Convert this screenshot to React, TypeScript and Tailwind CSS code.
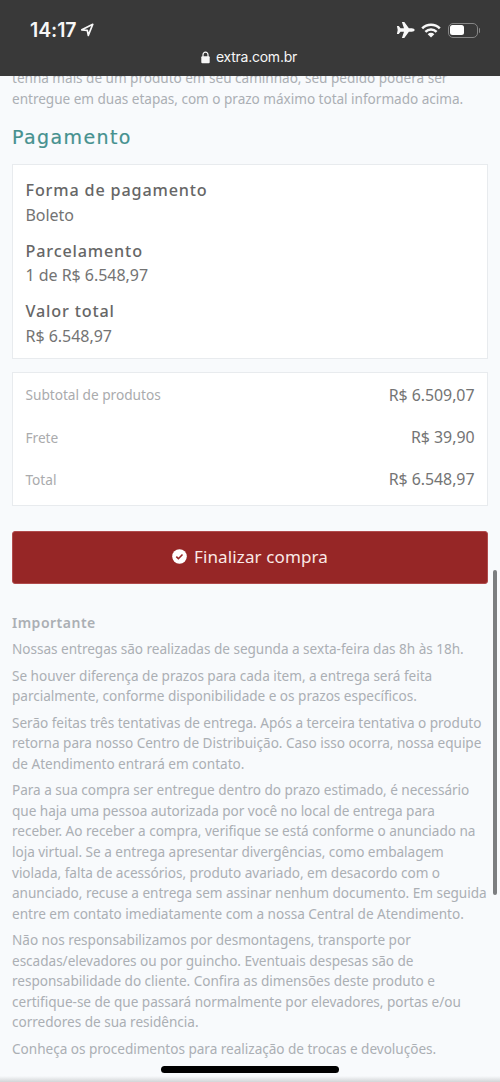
import { ReactNode } from "react";

const payment = [
  { label: "Forma de pagamento", value: "Boleto" },
  { label: "Parcelamento", value: "1 de R$ 6.548,97" },
  { label: "Valor total", value: "R$ 6.548,97" },
];

const totals = [
  { label: "Subtotal de produtos", value: "R$ 6.509,07" },
  { label: "Frete", value: "R$ 39,90" },
  { label: "Total", value: "R$ 6.548,97" },
];

const notices = [
  ["Nossas entregas são realizadas de segunda a sexta-feira das 8h às 18h."],
  [
    "Se houver diferença de prazos para cada item, a entrega será feita",
    "parcialmente, conforme disponibilidade e os prazos específicos.",
  ],
  [
    "Serão feitas três tentativas de entrega. Após a terceira tentativa o produto",
    "retorna para nosso Centro de Distribuição. Caso isso ocorra, nossa equipe",
    "de Atendimento entrará em contato.",
  ],
  [
    "Para a sua compra ser entregue dentro do prazo estimado, é necessário",
    "que haja uma pessoa autorizada por você no local de entrega para",
    "receber. Ao receber a compra, verifique se está conforme o anunciado na",
    "loja virtual. Se a entrega apresentar divergências, como embalagem",
    "violada, falta de acessórios, produto avariado, em desacordo com o",
    "anunciado, recuse a entrega sem assinar nenhum documento. Em seguida",
    "entre em contato imediatamente com a nossa Central de Atendimento.",
  ],
  [
    "Não nos responsabilizamos por desmontagens, transporte por",
    "escadas/elevadores ou por guincho. Eventuais despesas são de",
    "responsabilidade do cliente. Confira as dimensões deste produto e",
    "certifique-se de que passará normalmente por elevadores, portas e/ou",
    "corredores de sua residência.",
  ],
  ["Conheça os procedimentos para realização de trocas e devoluções."],
];

function StatusBar() {
  return (
    <header className="relative z-10 h-[76px] shrink-0 bg-[#393939] font-['Inter',sans-serif] text-[#f7f7f7]">
      <div className="flex h-[60px] items-center justify-between pl-[30px] pr-[20px]">
        <div className="flex items-center gap-[4px]">
          <span className="pt-px text-[19.5px] font-semibold leading-none tracking-[-0.1px]">14:17</span>
          <svg width="14" height="14" viewBox="0 0 14 14" fill="none" stroke="currentColor" strokeWidth="1.7" strokeLinejoin="round">
            <path d="M12.8 1.3 8.3 12.4 7.3 7.3 1.8 6.8Z" />
          </svg>
        </div>
        <div className="flex items-center">
          <svg width="19" height="18" viewBox="0 0 19 18" fill="currentColor">
            <path d="M18.6 9c0 1-1.3 1.7-2.8 1.7h-2.9L8.3 17H5.9l2.1-6.3H4.5L2.8 13H.9l.8-4L.9 5h1.9l1.7 2.3H8L5.9 1h2.4l4.6 6.3h2.9c1.5 0 2.8.7 2.8 1.7Z" />
          </svg>
          <svg className="ml-[6px]" width="20" height="15" viewBox="0 0 20 15">
            <g fill="none" stroke="currentColor" strokeWidth="2.5">
              <path d="M1.2 5.3a12.5 12.5 0 0 1 17.6 0" />
              <path d="M4.4 8.8a8 8 0 0 1 11.2 0" />
            </g>
            <path d="M10 14.6 6.7 11.2a4.7 4.7 0 0 1 6.6 0Z" fill="currentColor" />
          </svg>
          <div className="ml-[7px] flex h-[15px] w-[30px] rounded-[5px] border border-[#858585] p-[1.5px]">
            <div className="w-[14px] rounded-[2.5px] bg-white" />
          </div>
          <div className="ml-px h-[5px] w-[1.5px] rounded-r-full bg-[#858585]" />
        </div>
      </div>
      <div className="-mt-[11px] flex h-[16px] items-center justify-center gap-[6px] pr-[2px] text-[14px] leading-none tracking-[-0.25px]">
        <svg width="9" height="13" viewBox="0 0 9 13">
          <path d="M2 6V3.7a2.5 2.5 0 0 1 5 0V6" fill="none" stroke="currentColor" strokeWidth="1.2" />
          <rect x="0.3" y="5.3" width="8.4" height="7" rx="1" fill="currentColor" />
        </svg>
        <span>extra.com.br</span>
      </div>
    </header>
  );
}

function Card({ className, children }: { className: string; children: ReactNode }) {
  return <section className={`border border-[#e8ebee] bg-white px-[12.5px] ${className}`}>{children}</section>;
}

function Payment() {
  return (
    <Card className="mt-[12px] flex h-[195px] flex-col gap-[12px] pt-[13.4px]">
      {payment.map(({ label, value }) => (
        <div
          key={label}
          className="h-[48.4px] text-[16px] leading-[24.3px] text-[#737373]">
          <h3 className="text-[16.2px] font-medium tracking-[0.83px] text-[#666]">{label}</h3>
          <p>{value}</p>
        </div>
      ))}
    </Card>
  );
}

function Totals() {
  return (
    <Card className="mt-[12.5px] flex h-[134.5px] flex-col pt-[1.5px]">
      {totals.map(({ label, value }) => (
        <div
          key={label}
          className="flex h-[42.2px] items-center justify-between">
          <span className="pt-px text-[13.7px] text-[#aaabad]">{label}</span>
          <span className="text-[15.9px] text-[#747474]">{value}</span>
        </div>
      ))}
    </Card>
  );
}

function Notices() {
  return (
    <section className="mt-[28.5px] text-[#abafb4]">
      <h3 className="text-[14px] font-semibold leading-[20.5px] tracking-[0.5px]">Importante</h3>
      <div className="mt-[6px] flex flex-col gap-[6px]">
        {notices.map((lines) => (
          <p key={lines[0]}>
            {lines.map((line) => (
              <span
                key={line}
                className="block">
                {line}
              </span>
            ))}
          </p>
        ))}
      </div>
    </section>
  );
}

export default function App() {
  return (
    <div className="relative flex h-[1082px] w-[500px] flex-col overflow-hidden bg-[#f8fafc] font-['Noto_Sans',sans-serif]">
      <StatusBar />
      <main className="-mt-[8px] whitespace-nowrap px-[12px] text-[13.6px] leading-[20.55px] tracking-[-0.03px]">
        <p className="text-[#abafb4]">
          tenha mais de um produto em seu caminhão, seu pedido poderá ser
          <br />
          entregue em duas etapas, com o prazo máximo total informado acima.
        </p>
        <h2 className="mt-[15px] font-['DejaVu_Sans',sans-serif] text-[19px] leading-[27px] tracking-[1.4px] text-[#46918f] [-webkit-text-stroke:0.2px]">
          Pagamento
        </h2>
        <div className="pt-px">
          <Payment />
        </div>
        <Totals />
        <button className="mt-[24.5px] flex h-[53.5px] w-full items-center justify-center gap-[7px] rounded-[3px] border border-[#b04b4c] bg-[#962626] pb-px text-[17px] tracking-[0.12px] text-[#fae9e7]">
          <svg width="15" height="15" viewBox="0 0 15 15">
            <circle cx="7.5" cy="7.5" r="7.3" fill="#fff" />
            <path d="m4.3 7.7 2.1 2 4.1-4.2" fill="none" stroke="#962626" strokeWidth="1.6" />
          </svg>
          Finalizar compra
        </button>
        <Notices />
      </main>
      <div className="absolute right-[3.5px] top-[570px] h-[325px] w-[4px] rounded-full bg-[#7c7e80]" />
      <div className="absolute bottom-0 h-[6px] w-full bg-linear-to-b from-transparent to-[#d3d5d7]" />
      <div className="absolute left-[161px] top-[1066px] h-[6.5px] w-[178px] rounded-full bg-black" />
    </div>
  );
}
